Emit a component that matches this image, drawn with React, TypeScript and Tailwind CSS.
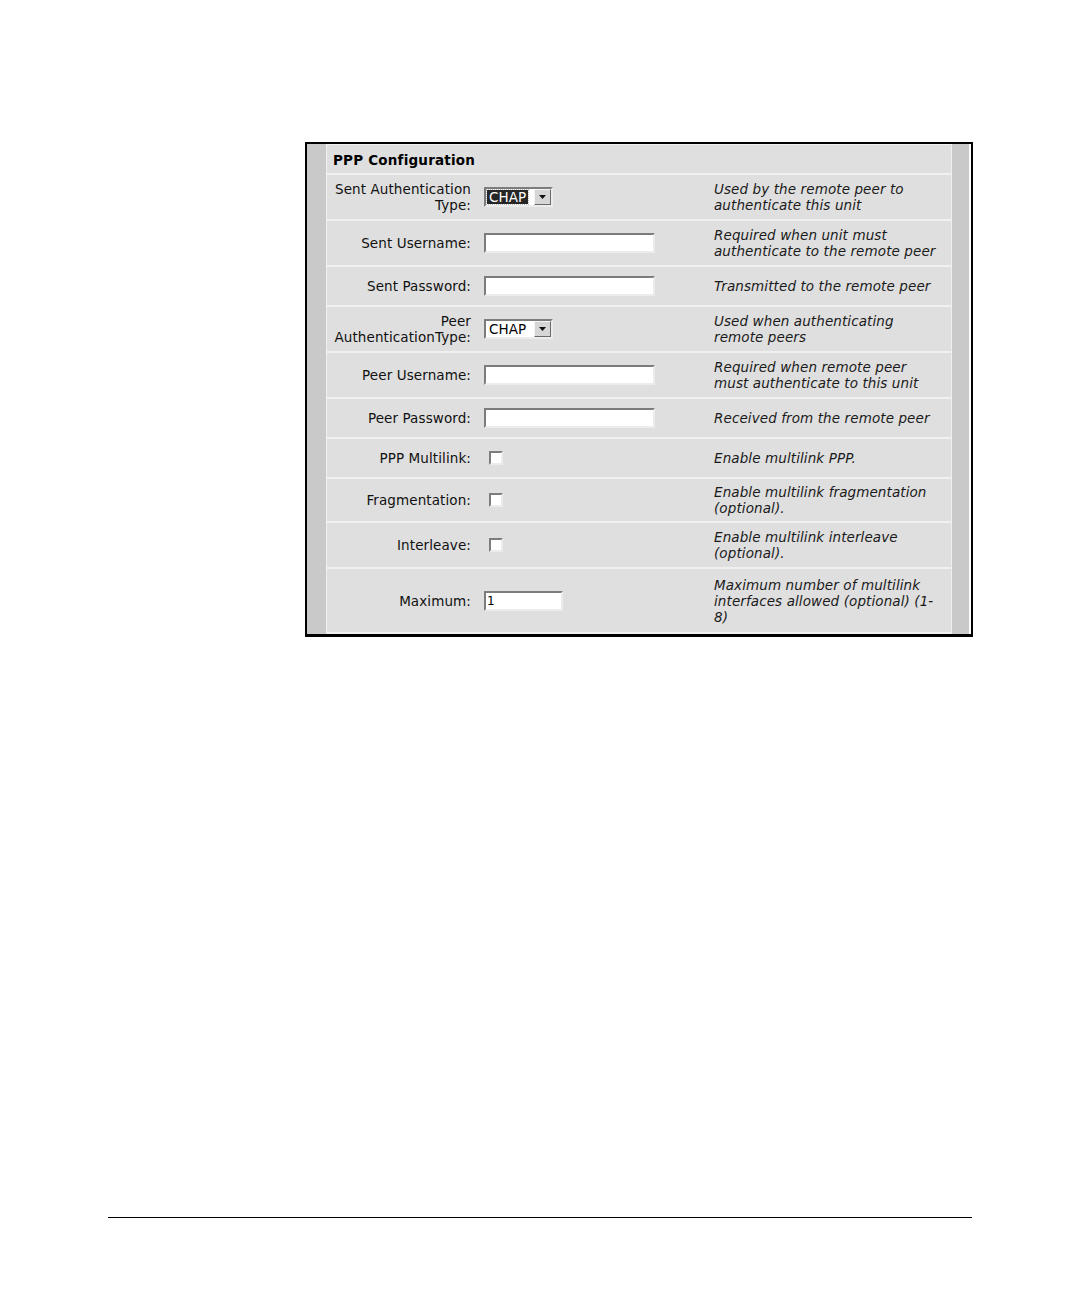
import React from "react";

const font = { fontFamily: '"DejaVu Sans", Verdana, sans-serif' };

function TextInput({ w = "w-[171px]", value = "" }: { w?: string; value?: string }) {
  return (
    <div
      className={`${w} h-[20px] bg-white border-2 border-t-[#7c7c7c] border-l-[#7c7c7c] border-r-[#ececec] border-b-[#ececec] flex items-center pl-[1px] text-[12px] leading-none text-black`}
    >
      {value}
    </div>
  );
}

function Select({ focused = false }: { focused?: boolean }) {
  return (
    <div className="w-[69px] h-[20px] bg-white border-2 border-t-[#7c7c7c] border-l-[#7c7c7c] border-r-[#ececec] border-b-[#ececec] flex items-stretch">
      <div className="flex-1 flex items-center pl-[1px] pr-[1px]">
        <span
          className={
            focused
              ? "bg-[#262626] text-white px-[2px] leading-[14px] outline outline-1 outline-dotted outline-[#bbbbbb] text-[13.5px]"
              : "text-black px-[2px] leading-[14px] text-[13.5px]"
          }
        >
          CHAP
        </span>
      </div>
      <div className="w-[17px] bg-[#d6d6d6] border border-t-[#f4f4f4] border-l-[#f4f4f4] border-r-[#6a6a6a] border-b-[#6a6a6a] flex items-center justify-center">
        <svg width="7" height="4" viewBox="0 0 7 4">
          <path d="M0 0 H7 L3.5 4 Z" fill="#111" />
        </svg>
      </div>
    </div>
  );
}

function Checkbox() {
  return (
    <div className="ml-[5px] w-[14px] h-[14px] bg-white border-2 border-t-[#7c7c7c] border-l-[#7c7c7c] border-r-[#ececec] border-b-[#ececec]" />
  );
}

type Row = {
  h: string;
  label: React.ReactNode;
  control: React.ReactNode;
  desc: React.ReactNode;
};

const rows: Row[] = [
  {
    h: "h-[44px]",
    label: (
      <>
        Sent Authentication
        <br />
        Type:
      </>
    ),
    control: <Select focused />,
    desc: (
      <>
        Used by the remote peer to
        <br />
        authenticate this unit
      </>
    ),
  },
  {
    h: "h-[44px]",
    label: "Sent Username:",
    control: <TextInput />,
    desc: (
      <>
        Required when unit must
        <br />
        authenticate to the remote peer
      </>
    ),
  },
  {
    h: "h-[38px]",
    label: "Sent Password:",
    control: <TextInput />,
    desc: "Transmitted to the remote peer",
  },
  {
    h: "h-[44px]",
    label: (
      <>
        Peer
        <br />
        AuthenticationType:
      </>
    ),
    control: <Select />,
    desc: (
      <>
        Used when authenticating
        <br />
        remote peers
      </>
    ),
  },
  {
    h: "h-[44px]",
    label: "Peer Username:",
    control: <TextInput />,
    desc: (
      <>
        Required when remote peer
        <br />
        must authenticate to this unit
      </>
    ),
  },
  {
    h: "h-[38px]",
    label: "Peer Password:",
    control: <TextInput />,
    desc: "Received from the remote peer",
  },
  {
    h: "h-[38px]",
    label: "PPP Multilink:",
    control: <Checkbox />,
    desc: "Enable multilink PPP.",
  },
  {
    h: "h-[42px]",
    label: "Fragmentation:",
    control: <Checkbox />,
    desc: (
      <>
        Enable multilink fragmentation
        <br />
        (optional).
      </>
    ),
  },
  {
    h: "h-[44px]",
    label: "Interleave:",
    control: <Checkbox />,
    desc: (
      <>
        Enable multilink interleave
        <br />
        (optional).
      </>
    ),
  },
  {
    h: "h-[63px]",
    label: "Maximum:",
    control: <TextInput w="w-[79px]" value="1" />,
    desc: (
      <>
        Maximum number of multilink
        <br />
        interfaces allowed (optional) (1-
        <br />
        8)
      </>
    ),
  },
];

export default function App() {
  return (
    <div className="w-[1080px] h-[1296px] bg-white flex flex-col" style={font}>
      <div className="mt-[142px] ml-[305px] w-[668px] h-[495px] border-2 border-b-[3px] border-black flex bg-white">
        <div className="w-[19px] bg-[#c9c9c9]" />
        <div className="flex-1 bg-[#f0f0f0] flex flex-col gap-[2px] px-[1px] pt-[1px]">
          <div className="h-[28px] bg-[#dfdfdf] flex items-center pl-[6px] pt-[2px] text-[13.5px] tracking-[0.2px] font-bold text-black">
            PPP Configuration
          </div>
          {rows.map((r, i) => (
            <div key={i} className={`${r.h} bg-[#dfdfdf] flex items-center text-[13.5px] leading-[16px] tracking-[0.1px] text-[#111]`}>
              <div className="w-[150px] pr-[6px] text-right whitespace-nowrap">{r.label}</div>
              <div className="w-[230px] pl-[7px] flex items-center">{r.control}</div>
              <div className="flex-1 pl-[7px] italic whitespace-nowrap text-[#1a1a1a]">{r.desc}</div>
            </div>
          ))}
        </div>
        <div className="w-[17px] bg-[#c9c9c9]" />
        <div className="w-[2px] bg-white" />
      </div>
      <div className="mt-auto mb-[78px] ml-[108px] w-[864px] h-[1px] bg-black" />
    </div>
  );
}
